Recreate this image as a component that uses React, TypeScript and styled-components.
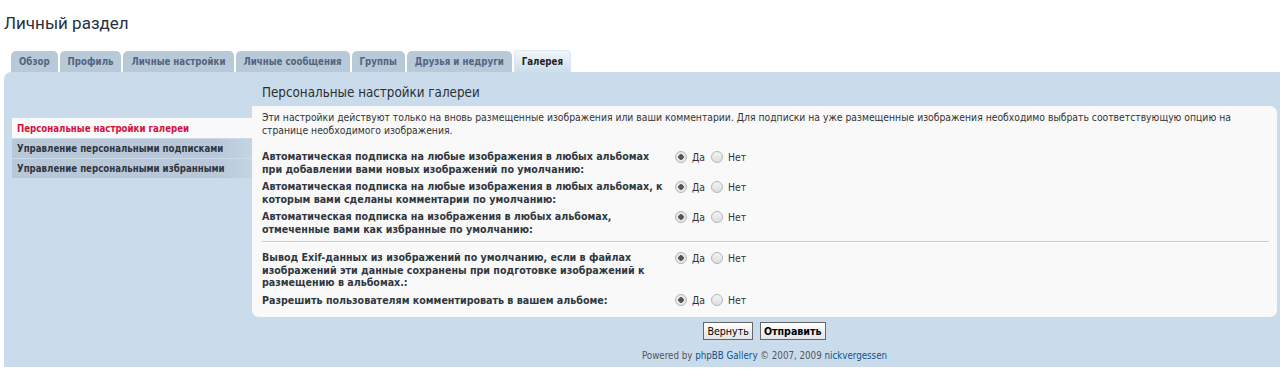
import React from 'react';
import styled, { createGlobalStyle } from 'styled-components';

const TABS = ['Обзор', 'Профиль', 'Личные настройки', 'Личные сообщения', 'Группы', 'Друзья и недруги', 'Галерея'];

const MENU = ['Персональные настройки галереи', 'Управление персональными подписками', 'Управление персональными избранными'];

const OPTIONS_TOP = [
  'Автоматическая подписка на любые изображения в любых альбомах при добавлении вами новых изображений по умолчанию:',
  'Автоматическая подписка на любые изображения в любых альбомах, к которым вами сделаны комментарии по умолчанию:',
  'Автоматическая подписка на изображения в любых альбомах, отмеченные вами как избранные по умолчанию:',
];

const OPTIONS_BOTTOM = [
  'Вывод Exif-данных из изображений по умолчанию, если в файлах изображений эти данные сохранены при подготовке изображений к размещению в альбомах.:',
  'Разрешить пользователям комментировать в вашем альбоме:',
];

export default function App() {
  const renderRow = (label: string) => (
    <Row key={label}>
      <Label>{label}</Label>
      <Choices>
        <Choice>
          <Radio $checked />
          Да
        </Choice>
        <Choice>
          <Radio />
          Нет
        </Choice>
      </Choices>
    </Row>
  );

  return (
    <Page>
      <GlobalStyle />
      <Title>Личный раздел</Title>
      <Tabs>
        {TABS.map((tab, index) => (
          <Tab key={tab} $active={index === TABS.length - 1}>
            {tab}
          </Tab>
        ))}
      </Tabs>
      <Panel>
        <Menu>
          {MENU.map((item, index) => (
            <MenuItem key={item} $active={index === 0}>
              {item}
            </MenuItem>
          ))}
        </Menu>
        <Main>
          <Heading>Персональные настройки галереи</Heading>
          <Box>
            <Description>
              Эти настройки действуют только на вновь размещенные изображения или ваши комментарии. Для подписки на уже
              размещенные изображения необходимо выбрать соответствующую опцию на странице необходимого изображения.
            </Description>
            {OPTIONS_TOP.map(renderRow)}
            <Separator />
            {OPTIONS_BOTTOM.map(renderRow)}
          </Box>
          <Buttons>
            <Button>Вернуть</Button>
            <Button $bold>Отправить</Button>
          </Buttons>
          <Footer>
            Powered by <Link>phpBB Gallery</Link> © 2007, 2009 <Link>nickvergessen</Link>
          </Footer>
        </Main>
      </Panel>
    </Page>
  );
}

const FONT = '"DejaVu Sans Condensed", "DejaVu Sans", sans-serif';

const GlobalStyle = createGlobalStyle`
  body {
    margin: 0;
    background: #fff;
    font-family: ${FONT};
    color: #333;
  }
`;

const Page = styled.div`
  padding: 0 0 0 4px;
  height: 382px;
  overflow: hidden;
`;

const Title = styled.h2`
  margin: 0;
  padding: 11px 0 0 0;
  height: 24px;
  font-family: Roboto, sans-serif;
  font-size: 17px;
  font-weight: 400;
  line-height: 24px;
  color: #28313f;
`;

const Tabs = styled.div`
  display: flex;
  align-items: flex-end;
  gap: 2px;
  margin: 14px 0 0 7px;
  height: 23px;
`;

const Tab = styled.div<{ $active?: boolean }>`
  display: flex;
  align-items: center;
  height: ${(p) => (p.$active ? '23px' : '21px')};
  padding: 0 8px;
  margin-bottom: ${(p) => (p.$active ? '-1px' : '0')};
  border-radius: 5px 5px 0 0;
  background: ${(p) => (p.$active ? 'linear-gradient(#f4f8fb, #cadceb)' : '#b8c9d8')};
  box-shadow: ${(p) => (p.$active ? 'inset 0 1px 0 #e0eaf3, inset 1px 0 0 #dde7f0, inset -1px 0 0 #dde7f0' : 'none')};
  font-size: 9.65px;
  font-weight: 700;
  color: ${(p) => (p.$active ? '#222' : '#536482')};
`;

const Panel = styled.div`
  display: flex;
  height: 295px;
  background: #cadceb;
  border-radius: 7px 0 0 0;
`;

const Menu = styled.div`
  display: flex;
  flex-direction: column;
  gap: 1px;
  width: 240px;
  margin: 46px 0 0 8px;
`;

const MenuItem = styled.div<{ $active?: boolean }>`
  height: ${(p) => (p.$active ? '20px' : '19px')};
  display: flex;
  align-items: center;
  padding-left: 5px;
  background: ${(p) => (p.$active ? '#f9f9f9' : 'linear-gradient(to right, #b8c8d8 85%, #c4d5e4)')};
  font-size: 9.6px;
  font-weight: 700;
  color: ${(p) => (p.$active ? '#d31141' : '#2e3640')};
`;

const Main = styled.div`
  flex: 1;
  display: flex;
  flex-direction: column;
  margin-right: 3px;
`;

const Heading = styled.h3`
  margin: 0;
  padding: 13px 0 0 10px;
  height: 21px;
  font-size: 13.3px;
  font-weight: 400;
  line-height: 16px;
  color: #2a2e33;
`;

const Box = styled.div`
  display: flex;
  flex-direction: column;
  gap: 5px;
  background: #f9f9f9;
  border-radius: 0 7px 7px 7px;
  padding: 5px 8px 10px 10px;
`;

const Description = styled.p`
  margin: 0 0 8px 0;
  font-size: 10.3px;
  line-height: 13px;
  color: #333;
`;

const Row = styled.div`
  display: flex;
  align-items: flex-start;
`;

const Label = styled.div`
  width: 410px;
  font-size: 10.6px;
  font-weight: 700;
  line-height: 12.5px;
  color: #2f3740;
`;

const Choices = styled.div`
  display: flex;
  gap: 6px;
  margin-left: 3px;
`;

const Choice = styled.div`
  display: flex;
  align-items: center;
  gap: 5px;
  height: 13px;
  font-size: 10.4px;
  color: #333;
`;

const Radio = styled.span<{ $checked?: boolean }>`
  box-sizing: border-box;
  width: 12px;
  height: 12px;
  border-radius: 50%;
  border: 1px solid #b5b5b5;
  background: ${(p) =>
    p.$checked
      ? 'radial-gradient(circle, #555 0 2.5px, #e8e8e8 3px)'
      : 'linear-gradient(#f4f4f4, #dedede)'};
`;

const Separator = styled.div`
  height: 1px;
  margin: 1px 0 3px 0;
  background: #c8ccd0;
  border-bottom: 1px solid #fff;
`;

const Buttons = styled.div`
  display: flex;
  justify-content: center;
  gap: 7px;
  margin-top: 5px;
`;

const Button = styled.button<{ $bold?: boolean }>`
  height: 18px;
  padding: 0 3px;
  border: 1px solid #666;
  border-radius: 0;
  background: linear-gradient(#ffffff, #e4e4e4);
  font-family: ${FONT};
  font-size: 10.6px;
  font-weight: ${(p) => (p.$bold ? 700 : 400)};
  color: #000;
  line-height: 16px;
`;

const Footer = styled.div`
  margin-top: 10px;
  text-align: center;
  font-size: 9.7px;
  color: #555;
`;

const Link = styled.span`
  color: #105289;
`;
